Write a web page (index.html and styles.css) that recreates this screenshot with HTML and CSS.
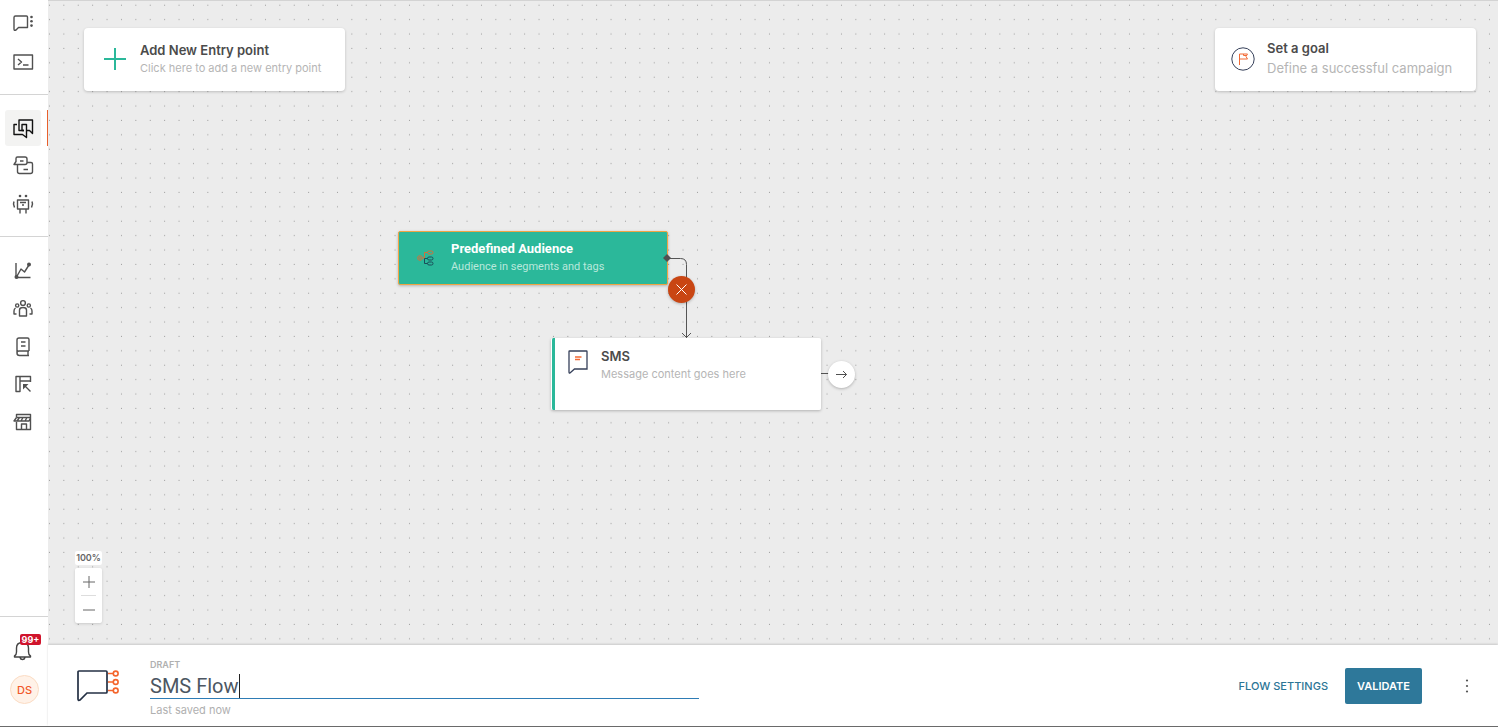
FILE: index.html
```html
<!DOCTYPE html>
<html lang="en">
<head>
<meta charset="utf-8">
<title>SMS Flow</title>
<link rel="stylesheet" href="styles.css">
</head>
<body>
<div class="app">
  <nav class="sidebar" aria-label="Main">
    <div class="group group-top">
      <a class="item" href="#" aria-label="Conversations"><svg class="icon" viewBox="0 0 24 24"><path d="M4.500 5H15.500Q16.500 5 16.500 6V16.500H7.500L5 19Q3 20 3 18V6.500Q3 5 4.500 5Z"/><g class="solid"><circle cx="20.500" cy="6" r="1.300"/><circle cx="20.500" cy="10.300" r="1.300"/><circle cx="20.500" cy="14.600" r="1.300"/></g></svg></a>
      <a class="item" href="#" aria-label="Console"><svg class="icon" viewBox="0 0 24 24"><path d="M3 5H21.500V19H3ZM7 9L10.500 12L7 15M12 15H17.500"/></svg></a>
    </div>
    <div class="group group-build">
      <a class="item active" href="#" aria-label="Flows"><svg class="icon" viewBox="0 0 24 24"><path d="M6 8.500H3V18.500H11.500L15.500 21.500V8.500H11V14.500H13"/><path d="M13 14.500H8V4H21.500V17.500L18.500 14.500H16"/></svg></a>
      <a class="item" href="#" aria-label="Templates"><svg class="icon" viewBox="0 0 24 24"><path d="M6.500 10.500V17.500Q6.500 19.500 8.500 19.500H19.500Q21.500 19.500 21.500 17.500V10Q21.500 8.500 20 8.500H16M3 10.500L5 7.500V4.500Q5 3 6.500 3H14Q16 3 16 5V8.500Q16 10.500 14 10.500ZM9 7H12.500M12.500 15.500H17"/></svg></a>
      <a class="item" href="#" aria-label="Bots"><svg class="icon" viewBox="0 0 24 24"><path d="M6.500 8H17.500V17H6.500ZM3 9.500L2.500 12L3.500 15.500M21 9.500L21.500 12L20.500 15.500M9 17V21.500M15 17V21.500M9 10.500H15M11 13H13"/><g class="solid"><circle cx="9" cy="4" r="1.300"/><circle cx="15" cy="4" r="1.300"/></g></svg></a>
    </div>
    <div class="group group-tools">
      <a class="item" href="#" aria-label="Analytics"><svg class="icon" viewBox="0 0 24 24"><path d="M5 4V18.500H19.500M5.500 18L10 10L13.500 13L18 6"/><g class="solid"><circle cx="5.500" cy="18" r="2"/><circle cx="18" cy="5.500" r="2"/></g></svg></a>
      <a class="item" href="#" aria-label="People"><svg class="icon" viewBox="0 0 24 24"><circle cx="12" cy="6" r="2.400"/><circle cx="6.200" cy="8.500" r="1.600"/><circle cx="17.800" cy="8.500" r="1.600"/><path d="M8.500 19V13Q8.500 10.500 12 10.500T15.500 13V19ZM5.500 17H3V14Q3 12 4.500 11M18.500 17H21V14Q21 12 19.500 11"/></svg></a>
      <a class="item" href="#" aria-label="Content"><svg class="icon" viewBox="0 0 24 24"><path d="M18 16V4.500Q18 3 16.500 3H8Q6 3 6 5V18Q6 20.500 8.500 20.500H18M18 16H8Q6 16 6 18M17 16V20.500M10 7H14.500M10 11H14.500"/></svg></a>
      <a class="item" href="#" aria-label="Pages"><svg class="icon" viewBox="0 0 24 24"><path d="M19.500 9V3.500H5V18.500H9V3.500M9 8H19.500M19.500 18.500L13 12"/><path class="fill" d="M12 11H17.500L12 16.500Z"/></svg></a>
      <a class="item" href="#" aria-label="Store"><svg class="icon" viewBox="0 0 24 24"><path d="M5.500 6V3.500H19.500V18.500H5.500V11M10.500 18.500V13H15.500V18.500M5.500 6.500H19.500M5.500 6.500L3 10H6L8.500 6.500M6 10H10L12 6.500M10 10H14L16 6.500M14 10H18L19.500 7"/></svg></a>
    </div>
    <div class="group group-user">
      <button class="bell" aria-label="Notifications"><svg class="icon" viewBox="0 0 24 24"><path d="M4.500 18V17Q6.500 16 6.500 13V9Q6.500 3.500 12.500 3.500T18.500 9V13Q18.500 16 20.500 17V18ZM10 18.500Q10.500 20.500 12.500 20.500T15 18.500"/></svg><span class="badge">99+</span></button>
      <button class="avatar">DS</button>
    </div>
  </nav>
  <div class="workspace">
    <main class="canvas">
      <svg class="dots" aria-hidden="true"><defs><pattern id="grid" width="20" height="20" patternUnits="userSpaceOnUse" patternTransform="scale(.72)"><circle cx="2" cy="7" r="0.750"/></pattern></defs><rect width="100%" height="100%" fill="url(#grid)"/></svg>
      <div class="cards">
        <button class="card entry"><svg class="plus" viewBox="0 0 22 22"><path d="M11 0V22M0 11H22"/></svg><span class="copy"><strong class="title">Add New Entry point</strong><span class="sub">Click here to add a new entry point</span></span></button>
        <button class="card goal"><svg class="flag" viewBox="0 0 24 24"><circle cx="12" cy="12" r="11.200"/><path d="M8.500 18V7H16.500L15 9.500L16.500 12H8.500M12.500 7V8.500H16"/></svg><span class="copy"><strong class="title">Set a goal</strong><span class="sub sub-large">Define a successful campaign</span></span></button>
      </div>
      <svg class="wires" viewBox="0 0 200 140" aria-hidden="true"><path d="M20 18.500H32.500Q38.500 18.500 38.500 24.500V98M34 93L38.500 97.500L43 93M172 133.500H182"/></svg>
      <article class="node audience">
        <svg class="tree" viewBox="0 0 18 18"><g class="orange"><circle cx="3" cy="9" r="2.300"/><circle cx="3" cy="9" r="0.600"/><path d="M5 9H7.500V3.500H10.500"/><rect x="10.500" y="2" width="5.500" height="3" rx="1.500"/></g><g class="dark"><path d="M7.500 9.500H10.500M7.500 9.500V14.500H10.500"/><rect x="10.500" y="8" width="5.500" height="3" rx="1.500"/><rect x="10.500" y="13" width="5.500" height="3" rx="1.500"/></g></svg>
        <div class="copy"><strong class="title">Predefined Audience</strong><span class="sub">Audience in segments and tags</span></div>
        <svg class="port" viewBox="0 0 8 8"><path d="M4 0L8 4L4 8L0 4Z"/></svg>
      </article>
      <article class="node sms">
        <svg class="message" viewBox="0 0 20 24"><path d="M1 1.500Q1 1 1.500 1H18.500Q19 1 19 1.500V19H6.500L2 23Q1 23.500 1 22Z"/><path class="lines" d="M7 7H13.500M7 9.500H12"/></svg>
        <div class="copy"><strong class="title">SMS</strong><span class="sub">Message content goes here</span></div>
      </article>
      <button class="round remove" aria-label="Remove connection"><svg viewBox="0 0 13 13"><path d="M1.500 1.500L11.500 11.500M11.500 1.500L1.500 11.500"/></svg></button>
      <button class="round next" aria-label="Add next step"><svg viewBox="0 0 13 13"><path d="M1 6.500H11.500M8 3L11.500 6.500L8 10"/></svg></button>
      <div class="zoom">
        <output class="level">100%</output>
        <div class="steps">
          <button aria-label="Zoom in"><svg viewBox="0 0 12 12"><path d="M6 0V12M0 6H12"/></svg></button>
          <button aria-label="Zoom out"><svg viewBox="0 0 12 12"><path d="M0 6H12"/></svg></button>
        </div>
      </div>
    </main>
    <footer class="bar">
      <svg class="flow-logo" viewBox="0 0 44 32" aria-hidden="true"><path class="bubble" d="M2 1H29Q30 1 30 2V22Q30 23 29 23H10L3 30Q1 31 1 29V2Q1 1 2 1Z"/><path class="orange" d="M31 3.500H36M31 12H36M31 20.500H36"/><g class="orange"><circle cx="38.700" cy="3.500" r="2.400"/><circle cx="38.700" cy="12" r="2.400"/><circle cx="38.700" cy="20.500" r="2.400"/></g></svg>
      <div class="name">
        <label class="status" for="flow-name">DRAFT</label>
        <div class="field"><input id="flow-name" type="text" value="SMS Flow"><span class="caret"></span></div>
        <span class="saved">Last saved now</span>
      </div>
      <div class="actions">
        <button class="settings">FLOW SETTINGS</button>
        <button class="validate">VALIDATE</button>
        <button class="more" aria-label="More"><svg viewBox="0 0 4 14"><circle cx="2" cy="1.500" r="1.100"/><circle cx="2" cy="7" r="1.100"/><circle cx="2" cy="12.500" r="1.100"/></svg></button>
      </div>
    </footer>
  </div>
</div>
</body>
</html>
```
FILE: styles.css
```css
* { box-sizing: border-box; }
body { margin: 0; font-family: Inter, "Liberation Sans", sans-serif; color: #4b4b4b; }
button { font: inherit; color: inherit; border: 0; padding: 0; background: none; cursor: pointer; }
svg { display: block; fill: none; flex: none; }
.app { display: flex; min-height: 100vh; border-bottom: 1px solid #6b6b6b; }

.sidebar { width: 48px; flex: none; display: flex; flex-direction: column; background: #fff; }
.group { display: flex; flex-direction: column; gap: 2px; padding-left: 5px; }
.group + .group { border-top: 1px solid #d4d4d4; }
.group-top { padding-top: 5px; padding-bottom: 14px; gap: 3px; }
.group-build { padding-top: 15px; padding-bottom: 14px; }
.group-tools { padding-top: 16px; }
.group-user { margin-top: auto; padding: 22px 0 22px 10px; gap: 12px; }
.item { position: relative; width: 36px; height: 36px; display: grid; place-items: center; border-radius: 3px; color: #505050; }
.item.active { background: #f3f3f2; color: #111; }
.item.active::after { content: ""; position: absolute; top: 0; right: -7px; width: 1px; height: 100%; background: #e8602c; }
.icon { width: 24px; height: 24px; stroke: currentColor; stroke-width: 1.4; stroke-linejoin: round; }
.icon .solid { fill: currentColor; stroke: none; }
.icon .fill { fill: currentColor; stroke: none; }
.bell { position: relative; width: 25px; height: 24px; color: #444; }
.badge { position: absolute; left: 10px; top: -5px; width: 21px; height: 11px; border-radius: 2px; background: #d0142c; color: #fff; font-size: 9px; line-height: 11px; font-weight: 700; }
.avatar { width: 29px; height: 29px; border: 1px solid #fbdcc4; border-radius: 50%; background: #fff2e8; color: #f1592a; font-size: 11px; font-weight: 500; }

.workspace { flex: 1; min-width: 0; display: flex; flex-direction: column; }
.canvas { position: relative; flex: 1; display: flex; flex-direction: column; justify-content: space-between; padding: 28px 22px 22px 36px; background: #ececec; box-shadow: inset 0 1px #d3d3d3; }
.dots { position: absolute; inset: 0; width: 100%; height: 100%; }
.dots circle { fill: #858585; }
.cards { position: relative; display: flex; justify-content: space-between; }
.card { width: 261px; height: 63px; display: flex; align-items: center; padding-bottom: 2px; border-radius: 4px; background: #fff; box-shadow: 0 1px 3px rgba(0,0,0,.2); text-align: left; }
.copy { display: flex; flex-direction: column; }
.title { font-size: 13px; line-height: 18px; font-weight: 600; }
.sub { font-size: 11px; line-height: 18px; color: #b5b5b5; }
.entry { padding-left: 20px; gap: 14px; }
.goal { padding-left: 16px; gap: 12px; }
.goal .copy { gap: 2px; padding-bottom: 2px; }
.sub-large { font-size: 13px; }
.plus { width: 22px; height: 22px; stroke: #2bb89a; stroke-width: 2; }
.flag { width: 24px; height: 24px; stroke: #36405a; }
.flag path { stroke: #f26a35; }

.wires { position: absolute; left: 600px; top: 240px; width: 200px; height: 140px; stroke: #555; stroke-width: 1; }
.node { position: absolute; width: 270px; display: flex; box-shadow: 0 1px 3px rgba(0,0,0,.25); }
.audience { left: 350px; top: 231px; height: 54px; align-items: center; gap: 16px; padding-left: 18px; border: 1px solid #f0a444; border-radius: 2px; background: #2bb89a; color: #fff; font-family: Roboto, sans-serif; }
.audience .title { font-weight: 700; }
.audience .sub { color: #b9e8dc; }
.tree { width: 18px; height: 18px; }
.tree .orange { stroke: #d86d38; }
.tree .dark { stroke: #1b4c59; }
.port { position: absolute; right: -4px; top: 22px; width: 8px; height: 8px; fill: #505050; }
.sms { left: 503px; top: 338px; width: 270px; height: 72px; gap: 13px; padding: 9px 16px; border-left: 1px solid #fff; border-radius: 2px; background: linear-gradient(90deg, #2bb89a 3px, #fff 3px); }
.message { width: 20px; height: 24px; margin-top: 3px; stroke: #36405a; stroke-width: 1.3; }
.message .lines { stroke: #f26a35; }
.round { position: absolute; width: 27px; height: 27px; display: grid; place-items: center; border-radius: 50%; box-shadow: 0 1px 3px rgba(0,0,0,.25); }
.round svg { width: 13px; height: 13px; stroke: currentColor; }
.remove { left: 620px; top: 276px; background: #c94613; color: #fff; }
.next { left: 780px; top: 361px; background: #fff; color: #505050; }

.zoom { position: relative; align-self: flex-start; width: 27px; margin-left: -9px; display: flex; flex-direction: column; gap: 3px; }
.level { height: 14px; border-radius: 2px; background: #fff; font-size: 9px; line-height: 14px; font-weight: 600; text-align: center; color: #666; }
.steps { display: flex; flex-direction: column; padding: 0 6px; border-radius: 2px; background: #fff; box-shadow: 0 1px 3px rgba(0,0,0,.15); }
.steps button { height: 27px; display: grid; place-items: center; }
.steps button + button { height: 28px; border-top: 1px solid #ddd; }
.steps svg { width: 12px; height: 12px; stroke: #666; }

.bar { position: relative; display: flex; align-items: center; height: 81px; padding: 0 26px 0 29px; background: #fff; box-shadow: 0 -1px 2px rgba(0,0,0,.15); }
.flow-logo { width: 44px; height: 32px; }
.bubble { stroke: #243044; stroke-width: 1.7; }
.flow-logo .orange { stroke: #f4652c; stroke-width: 1.6; }
.name { flex: 0 1 549px; margin-left: 29px; padding-top: 9px; display: flex; flex-direction: column; }
.status { font-size: 9px; line-height: 12px; font-weight: 600; color: #b0b0b0; }
.field { display: flex; align-items: flex-end; height: 28px; border-bottom: 1px solid #2e7cb5; }
.field input { field-sizing: content; border: 0; padding: 0; outline: 0; background: none; font: 20px/24px Roboto, sans-serif; color: #4c5662; }
.caret { width: 1px; height: 24px; background: #222; }
.saved { font-size: 11px; line-height: 22px; color: #b0b0b0; }
.actions { margin-left: auto; display: flex; align-items: center; font-size: 11px; }
.settings { color: #2c7596; font-weight: 500; }
.validate { width: 77px; height: 36px; margin-left: 17px; border-radius: 2px; background: #2e789a; color: #fff; font-weight: 600; }
.more { width: 10px; height: 36px; margin-left: 40px; display: grid; place-items: center; }
.more svg { width: 4px; height: 14px; fill: #555; }
```
